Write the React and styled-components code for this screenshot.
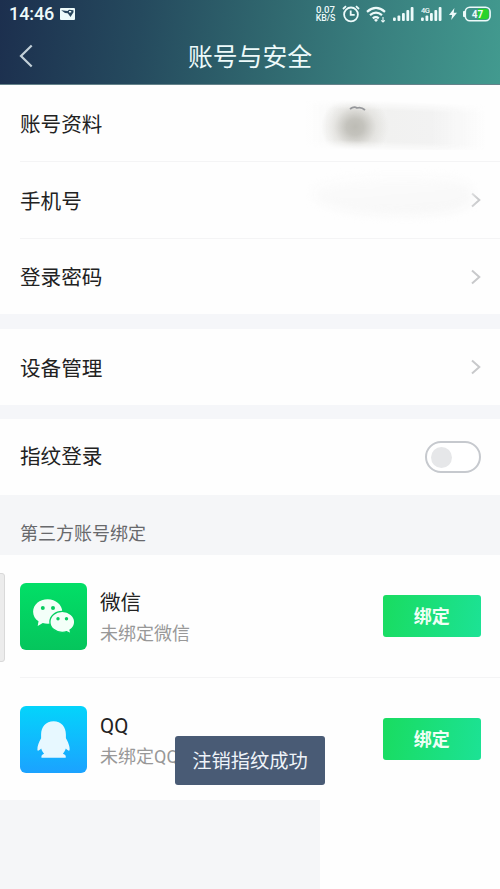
import React from 'react';
import styled, { createGlobalStyle } from 'styled-components';

const GlobalStyle = createGlobalStyle`
  * { box-sizing: border-box; }
  body { margin: 0; background: #fff; }
  button { font-family: inherit; border: 0; padding: 0; }
`;

const Screen = styled.div`
  position: relative;
  display: flex;
  flex-direction: column;
  width: 500px;
  height: 889px;
  overflow: hidden;
  background: #fefefe;
  color: #222;
  font-family: Roboto, 'Noto Sans CJK SC', sans-serif;
`;

const Header = styled.header`
  flex: none;
  height: 85px;
  color: #edfafa;
  background: linear-gradient(97deg, #1c2f4e 0%, #254a5e 28%, #30686f 54%, #39807f 75%, #429a8f 100%);
  border-bottom: 1px solid #64828a;
`;

const StatusBar = styled.div`
  display: flex;
  align-items: center;
  justify-content: space-between;
  height: 28px;
  padding: 0 9px 0 9px;
`;

const Clock = styled.div`
  display: flex;
  align-items: center;
  gap: 6px;
  font-size: 18px;
  line-height: 28px;
  font-weight: 500;
  letter-spacing: -0.1px;
`;

const StatusIcons = styled.div`
  display: flex;
  align-items: center;
  svg { display: block; }
`;

const Speed = styled.div`
  width: 21px;
  margin-right: 6px;
  font-size: 9.6px;
  line-height: 8.5px;
  text-align: center;
  white-space: nowrap;
  font-weight: 500;
  small { display: block; font-size: 8.8px; letter-spacing: -0.1px; }
`;

const Spacer = styled.span`
  width: ${(p) => p.$w}px;
`;

const NavBar = styled.div`
  display: grid;
  grid-template-columns: 60px 1fr 60px;
  align-items: center;
  height: 56px;
`;

const BackButton = styled.button`
  height: 56px;
  padding-left: 19px;
  background: none;
  color: #c3d0d8;
  text-align: left;
  svg { display: block; }
`;

const Title = styled.h1`
  margin: 3px 0 0;
  text-align: center;
  font-size: 24.8px;
  line-height: 36px;
  font-weight: 400;
`;

const Group = styled.section`
  flex: none;
  border-bottom: ${(p) => p.$gap || 0}px solid #f5f6f9;
  background: #fefefe;
`;

const Row = styled.div`
  position: relative;
  display: flex;
  align-items: center;
  justify-content: space-between;
  height: 76px;
  padding: 0 19px 0 20px;
`;

const LastRow = styled(Row)`
  height: 75px;
`;

const AppRow = styled(Row)`
  height: 122px;
  padding: 0 19.5px 0 19.5px;
`;

const Divider = styled.div`
  height: 1px;
  margin-left: 20px;
  background: #f4f4f5;
`;

const Label = styled.span`
  padding-top: ${(p) => (p.$raised ? 0 : 3)}px;
  margin-bottom: ${(p) => (p.$raised ? 1 : 0)}px;
  font-size: 20.6px;
  line-height: 30px;
`;

const AvatarSmudge = styled.div`
  position: absolute;
  left: 306px;
  top: 15px;
  width: 180px;
  height: 50px;
  background:
    radial-gradient(ellipse 34px 32px at 49px 27px, #bdbcb5 0%, #c4c3bd 25%, rgba(222,221,217,.7) 62%, transparent 100%),
    linear-gradient(90deg, transparent, #f1f1f0 45%, #f2f2f2 70%, transparent);
  -webkit-mask-image: linear-gradient(2deg, transparent 3%, #000 20%, #000 75%, transparent 92%);
`;

const HairMark = styled.svg`
  position: absolute;
  left: 349px;
  top: 20px;
`;

const PhoneSmudge = styled.div`
  position: absolute;
  left: 312px;
  top: 14px;
  width: 160px;
  height: 40px;
  border-radius: 50% 35% 45% 65%;
  background: linear-gradient(175deg, #fdfdfd, #fafafa 40%, #f7f7f7);
  filter: blur(4px);
`;

const Toggle = styled.span`
  display: flex;
  align-items: center;
  width: 56px;
  height: 32px;
  padding: 0 4px;
  border: 2px solid #c6c9ce;
  border-radius: 16px;
  background: #fff;
`;

const Knob = styled.span`
  width: 21px;
  height: 21px;
  border-radius: 50%;
  background: #e6e7e9;
`;

const SectionTitle = styled.h2`
  flex: none;
  height: 60px;
  margin: 0;
  padding: 9px 20px 0;
  background: #f5f6f8;
  color: #68696c;
  font-size: 18px;
  font-weight: 400;
  line-height: 59px;
`;

const AppIcon = styled.svg`
  display: block;
  flex: none;
  margin-right: 13.5px;
`;

const AppText = styled.div`
  flex: 1;
  padding-top: 4px;
`;

const AppName = styled.div`
  font-size: 20.6px;
  line-height: 30px;
`;

const AppStatus = styled.div`
  color: #989898;
  font-size: 18px;
  line-height: 31px;
`;

const BindButton = styled.button`
  width: 97.5px;
  height: 42px;
  padding-top: 2px;
  border-radius: 3px;
  background: linear-gradient(100deg, #19dc60, #1ce295);
  color: #effff6;
  font-size: 18px;
  line-height: 40px;
  font-weight: 700;
`;

const Footer = styled.div`
  flex: 1;
  width: 320px;
  background: #f5f6f8;
`;

const EdgeHandle = styled.div`
  position: absolute;
  left: -5px;
  top: 573px;
  width: 10px;
  height: 89px;
  border: 1px solid #d9d9d9;
  border-radius: 3px;
  background: #ececec;
`;

const Toast = styled.div`
  position: absolute;
  left: 175px;
  top: 736px;
  width: 150px;
  height: 49px;
  padding-top: 1px;
  border-radius: 3px;
  background: #495b75;
  color: #eef3f9;
  text-align: center;
  font-size: 19.3px;
  line-height: 50px;
`;

const Chevron = () => (
  <svg width="11" height="16" viewBox="0 0 11 16" fill="none" stroke="#c8c9cb" strokeWidth="2">
    <path d="M2 1.5 9.3 8 2 14.5" />
  </svg>
);

const PictureIcon = () => (
  <svg width="15" height="12" viewBox="0 0 15 12">
    <rect width="15" height="12" rx="1" fill="#edfafa" />
    <path d="M1.2 2.2 5 5l2.7.2L10.5 9l3-4.8V2.2L9 1.8 7.5 3z" fill="#28465d" />
    <path d="M9 3h2.2v1.5H9z" fill="#edfafa" />
  </svg>
);

const AlarmIcon = () => (
  <svg width="18" height="18" viewBox="0 0 18 18" fill="none" stroke="#edfafa" strokeWidth="1.8">
    <circle cx="9" cy="9.4" r="6.9" />
    <path d="M8.7 5.5v4.3h4M1 4l3-2.8M17 4l-3-2.8" />
  </svg>
);

const WifiIcon = () => (
  <svg width="20" height="17" viewBox="0 0 20 17" fill="none" stroke="#edfafa" strokeWidth="2.2">
    <path d="M1 5.8Q10-2 19 5.8M4 9.2q6-5.1 12 0M6.8 12.3q3-2.4 6 0" />
    <path d="m8 13.9 2 2.2 2-2.2q-2-1.7-4 0Z" fill="#edfafa" stroke="none" />
    <path d="M17 11v5m-1.8-1.7L17 16l1.8-1.7" strokeWidth="1.1" />
  </svg>
);

const SignalIcon = ({ network }) => (
  <svg width="21" height="16" viewBox="0 0 21 16" fill="#edfafa">
    <rect x="0" y="11.5" width="2.8" height="3.5" rx="1" />
    <rect x="4.5" y="9.5" width="2.8" height="5.5" rx="1" />
    <rect x="9" y="7" width="2.8" height="8" rx="1" />
    <rect x="13.4" y="4" width="2.8" height="11" rx="1" />
    <rect x="17.7" y="1" width="2.8" height="14" rx="1" />
    {network && <text x="0" y="6.5" fontSize="7.5" fontWeight="500" letterSpacing="-.5">{network}</text>}
  </svg>
);

const BoltIcon = () => (
  <svg width="8" height="12" viewBox="0 0 8 12" fill="#edfafa">
    <path d="M5.4 0 0 7h3.1L2.2 12 8 4.8H4.7z" />
  </svg>
);

const BatteryIcon = () => (
  <svg width="28" height="16" viewBox="0 0 28 16">
    <path d="M2 5H.8Q0 5 0 6v4q0 1 .8 1H2z" fill="#edfafa" />
    <rect x="2.3" y="1.2" width="24.8" height="13.5" rx="4.5" fill="none" stroke="#edfafa" strokeWidth="1.6" />
    <path d="M15 2.8h7.5a3.2 3.2 0 0 1 3.2 3.2v4a3.2 3.2 0 0 1-3.2 3.2H15z" fill="#29d329" />
    <text x="14.4" y="11.7" textAnchor="middle" fontSize="10" fontWeight="700" fill="#edfafa">47</text>
  </svg>
);

const WeChatIcon = () => (
  <AppIcon width="67" height="67" viewBox="0 0 67 67">
    <defs>
      <linearGradient id="wechat" x1="0" y1="0" x2="0" y2="1">
        <stop stopColor="#02df67" /><stop offset="1" stopColor="#05c55c" />
      </linearGradient>
    </defs>
    <rect width="67" height="67" rx="6" fill="url(#wechat)" />
    <g fill="#f3fff8">
      <path d="M27.7 16.3c-8.2 0-14.6 5.5-14.6 12.4 0 4 2 7.3 5.4 9.6L17.7 43l5.1-3c1.6.5 3.1.8 4.9.8 8.1 0 14.6-5.4 14.6-12.1s-6.5-12.4-14.6-12.4Z" />
      <path d="M42.2 28.4c-6.8 0-12.3 4.6-12.3 10.5s5.5 10.5 12.3 10.5c1.6 0 3.1-.2 4.4-.7l4.5 2.2-1.1-3.8c2.9-1.9 4.7-4.8 4.7-8.2 0-5.9-5.6-10.5-12.5-10.5Z" stroke="#03ce60" strokeWidth="1.3" />
    </g>
    <g fill="#08cc60">
      <circle cx="22.8" cy="25" r="2" /><circle cx="33" cy="25" r="2" />
      <circle cx="38" cy="35.8" r="1.7" /><circle cx="46.5" cy="35.8" r="1.7" />
    </g>
  </AppIcon>
);

const QQIcon = () => (
  <AppIcon width="67" height="67" viewBox="0 0 67 67">
    <defs>
      <linearGradient id="qq" x1="0" y1="0" x2="0" y2="1">
        <stop stopColor="#04d4fb" /><stop offset="1" stopColor="#1ba2ff" />
      </linearGradient>
    </defs>
    <rect width="67" height="67" rx="6" fill="url(#qq)" />
    <path d="M33.6 15.3c-7.8 0-12.5 5.6-12.5 13.1v3.8c-2 3.5-4 8-3.7 11.8.2 1.6 1.7.6 3.8-1.4.6 2 1.5 3.8 2.9 5.1-2.3.8-3 2-2.6 4h24.2c.5-2-.4-3.2-2.8-4 1.3-1.3 2.3-3.1 2.9-5.1 2.1 2 3.5 3 3.8 1.4.5-3.4-1.7-8.3-3.7-11.8v-3.8c0-7.5-4.6-13.1-12.3-13.1Z" fill="#e7f8ff" />
  </AppIcon>
);

const AccountRow = ({ icon, name, status }) => (
  <AppRow>
    {icon}
    <AppText>
      <AppName>{name}</AppName>
      <AppStatus>{status}</AppStatus>
    </AppText>
    <BindButton>绑定</BindButton>
  </AppRow>
);

export default function App() {
  return (
    <>
      <GlobalStyle />
      <Screen>
        <Header>
          <StatusBar>
            <Clock>14:46 <PictureIcon /></Clock>
            <StatusIcons>
              <Speed>0.07<small>KB/S</small></Speed>
              <AlarmIcon /><Spacer $w={6} />
              <WifiIcon /><Spacer $w={7} />
              <SignalIcon /><Spacer $w={7} />
              <SignalIcon network="4G" /><Spacer $w={7} />
              <BoltIcon /><Spacer $w={6} />
              <BatteryIcon />
            </StatusIcons>
          </StatusBar>
          <NavBar>
            <BackButton aria-label="返回">
              <svg width="14" height="24" viewBox="0 0 14 24" fill="none" stroke="currentColor" strokeWidth="2.2">
                <path d="M12.7 1.5 2 12l10.7 10.5" />
              </svg>
            </BackButton>
            <Title>账号与安全</Title>
          </NavBar>
        </Header>

        <Group $gap={15}>
          <Row>
            <Label>账号资料</Label>
            <AvatarSmudge />
            <HairMark width="18" height="6" viewBox="0 0 18 6" fill="none" stroke="#96979b" strokeWidth="1.8">
              <path d="M1 4q4-3 7-1 4-1.5 8 2" />
            </HairMark>
          </Row>
          <Divider />
          <Row>
            <Label>手机号</Label>
            <PhoneSmudge />
            <Chevron />
          </Row>
          <Divider />
          <LastRow>
            <Label>登录密码</Label>
            <Chevron />
          </LastRow>
        </Group>

        <Group $gap={14}>
          <Row>
            <Label>设备管理</Label>
            <Chevron />
          </Row>
        </Group>

        <Group>
          <Row>
            <Label $raised>指纹登录</Label>
            <Toggle><Knob /></Toggle>
          </Row>
        </Group>

        <SectionTitle>第三方账号绑定</SectionTitle>
        <Group>
          <AccountRow icon={<WeChatIcon />} name="微信" status="未绑定微信" />
          <Divider />
          <AccountRow icon={<QQIcon />} name="QQ" status="未绑定QQ" />
        </Group>
        <Footer />

        <EdgeHandle />
        <Toast role="status">注销指纹成功</Toast>
      </Screen>
    </>
  );
}
